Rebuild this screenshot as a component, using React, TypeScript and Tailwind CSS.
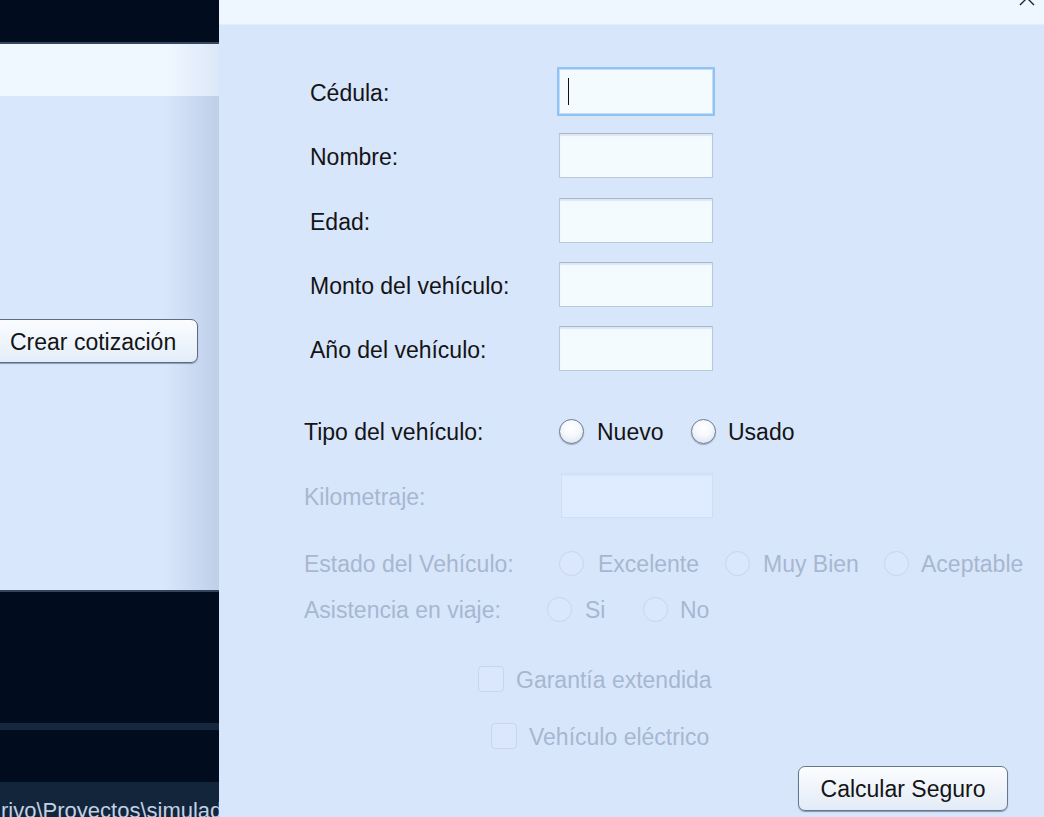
import React from "react";

const Radio = ({ disabled }: { disabled?: boolean }) =>
  disabled ? (
    <span className="block w-[25px] h-[25px] shrink-0 rounded-full border border-[#c7d5ee] bg-[#dbe7fc]" />
  ) : (
    <span className="block w-[25px] h-[25px] shrink-0 rounded-full border border-[#6f7a90] bg-[radial-gradient(circle_at_50%_35%,#ffffff_0%,#f4f8fd_45%,#d3ddea_100%)] shadow-[0_1px_1px_rgba(40,60,90,0.35)]" />
  );

const Check = () => (
  <span className="block w-[26px] h-[26px] shrink-0 rounded-[4px] border border-[#c7d5ee] bg-[#dbe7fc]" />
);

const Input = ({ disabled }: { disabled?: boolean }) =>
  disabled ? (
    <div className="w-[152px] h-[45px] bg-[#dfebfe] border border-[#d0ddf4] shadow-[inset_0_2px_0_#d6e3f8]" />
  ) : (
    <div className="w-[154px] h-[45px] bg-[#f4fbff] border border-[#b9c6dc] border-t-[#a8b5cc] shadow-[inset_0_2px_1px_#dde6f2]" />
  );

const Label = ({ children, disabled, w }: { children: React.ReactNode; disabled?: boolean; w: string }) => (
  <div className={(disabled ? "text-[#a7b7d0] " : "text-[#141414] ") + w + " shrink-0 pt-[3px] leading-none"}>
    {children}
  </div>
);

export default function App() {
  return (
    <div className="flex w-[1044px] h-[817px] overflow-hidden font-['Liberation_Sans',Arial,sans-serif] text-[23px]">
      {/* background window */}
      <div className="w-[219px] h-[817px] shrink-0 flex flex-col shadow-[inset_-2px_0_0_rgba(20,40,80,0.35)] overflow-hidden">
        <div className="h-[42px] shrink-0 bg-[#010d1e]" />
        <div className="h-[2px] shrink-0 bg-[#37475f]" />
        <div className="h-[52px] shrink-0 bg-linear-to-r from-[#f0f8ff] from-75% to-[#dce8f8]" />
        <div className="h-[494px] shrink-0 bg-linear-to-r from-[#d9e7fc] from-75% to-[#bfcfe8] flex flex-col">
          <div className="mt-[223px] ml-[-12px] w-[210px] h-[44px] rounded-[7px] border border-[#5b6b88] bg-linear-to-b from-[#fbfdff] to-[#e3edf9] shadow-[0_1px_1px_rgba(30,50,80,0.4)] flex items-center pl-[21px] pt-[3px] text-[#141414] leading-none">
            Crear cotización
          </div>
        </div>
        <div className="h-[2px] shrink-0 bg-[#34445c]" />
        <div className="h-[131px] shrink-0 bg-[#010d1e]" />
        <div className="h-[7px] shrink-0 bg-[#17283e]" />
        <div className="h-[52px] shrink-0 bg-[#010d1e]" />
        <div className="h-[35px] shrink-0 overflow-hidden bg-[#13253b] pt-[18px] pl-[1px] whitespace-nowrap text-[#c3d1e4] text-[22px] leading-none">
          {"rivo\\Proyectos\\simulador"}
        </div>
      </div>

      {/* dialog */}
      <div className="flex-1 flex flex-col bg-[#d8e6fc]">
        <div className="h-[25px] shrink-0 bg-[#eef7ff] border-b border-[#e2edfb] flex justify-end items-start">
          <svg width="16" height="16" viewBox="0 0 16 16" className="mr-[9px] -mt-[10px]">
            <path d="M1 1 L15 15 M15 1 L1 15" stroke="#1c2433" strokeWidth="1.4" fill="none" />
          </svg>
        </div>

        <div className="flex flex-col">
          {/* Cédula (focused) */}
          <div className="flex items-center h-[49px] mt-[42px] pl-[91px]">
            <Label w="w-[247px]">Cédula:</Label>
            <div className="w-[158px] h-[49px] border-2 border-[#8fc3f6] rounded-[1px] p-0 flex">
              <div className="flex-1 bg-[#f4fbff] border border-[#c6dcf4] flex items-center pl-[8px]">
                <div className="w-[1px] h-[27px] bg-[#111]" />
              </div>
            </div>
          </div>
          {[
            ["Nombre:", "mt-[17px]"],
            ["Edad:", "mt-[20px]"],
            ["Monto del vehículo:", "mt-[19px]"],
            ["Año del vehículo:", "mt-[19px]"],
          ].map(([t, m]) => (
            <div key={t} className={"flex items-center h-[45px] pl-[91px] " + m}>
              <Label w="w-[249px]">{t}</Label>
              <Input />
            </div>
          ))}

          {/* Tipo */}
          <div className="flex items-center h-[30px] mt-[45px] pl-[85px]">
            <Label w="w-[255px]">Tipo del vehículo:</Label>
            <div className="w-[132px] flex items-center gap-[13px] leading-none text-[#141414]">
              <Radio />
              <span className="pt-[2px]">Nuevo</span>
            </div>
            <div className="flex items-center gap-[12px] leading-none text-[#141414]">
              <Radio />
              <span className="pt-[2px]">Usado</span>
            </div>
          </div>

          {/* Kilometraje */}
          <div className="flex items-center h-[45px] mt-[27px] pl-[85px]">
            <Label w="w-[257px]" disabled>Kilometraje:</Label>
            <Input disabled />
          </div>

          {/* Estado */}
          <div className="flex items-center h-[30px] mt-[30px] pl-[85px] text-[#a7b7d0] leading-none">
            <Label w="w-[255px]" disabled>Estado del Vehículo:</Label>
            <div className="w-[166px] flex items-center gap-[14px]">
              <Radio disabled />
              <span className="pt-[2px]">Excelente</span>
            </div>
            <div className="w-[159px] flex items-center gap-[13px]">
              <Radio disabled />
              <span className="pt-[2px]">Muy Bien</span>
            </div>
            <div className="flex items-center gap-[12px]">
              <Radio disabled />
              <span className="pt-[2px]">Aceptable</span>
            </div>
          </div>

          {/* Asistencia */}
          <div className="flex items-center h-[30px] mt-[16px] pl-[85px] text-[#a7b7d0] leading-none">
            <Label w="w-[243px]" disabled>Asistencia en viaje:</Label>
            <div className="w-[96px] flex items-center gap-[13px]">
              <Radio disabled />
              <span className="pt-[2px]">Si</span>
            </div>
            <div className="flex items-center gap-[12px]">
              <Radio disabled />
              <span className="pt-[2px]">No</span>
            </div>
          </div>

          {/* Checkboxes */}
          <div className="flex items-center h-[30px] mt-[40px] pl-[259px] gap-[12px] text-[#a7b7d0] leading-none">
            <Check />
            <span className="pt-[2px]">Garantía extendida</span>
          </div>
          <div className="flex items-center h-[30px] mt-[27px] pl-[272px] gap-[12px] text-[#a7b7d0] leading-none">
            <Check />
            <span className="pt-[2px]">Vehículo eléctrico</span>
          </div>

          {/* Button */}
          <div className="flex mt-[15px] pl-[579px]">
            <div className="w-[210px] h-[45px] rounded-[7px] border border-[#66768f] bg-linear-to-b from-[#fcfdff] to-[#e2ebf7] shadow-[0_1px_1px_rgba(30,50,80,0.45)] flex items-center justify-center text-[#141414] leading-none pt-[1px]">
              Calcular Seguro
            </div>
          </div>
        </div>
      </div>
    </div>
  );
}
